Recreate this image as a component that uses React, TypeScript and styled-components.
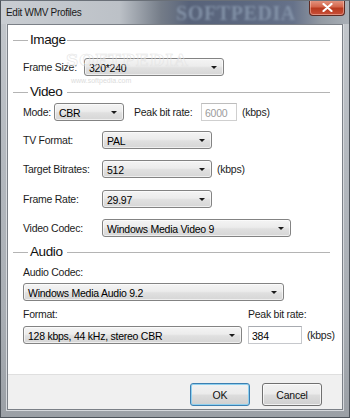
import React from 'react'
import styled, { createGlobalStyle } from 'styled-components'

const GlobalStyle = createGlobalStyle`
  html, body {
    margin: 0;
    padding: 0;
    background: #ffffff;
  }
  body {
    font-family: 'Liberation Sans', Arial, sans-serif;
  }
`

const App: React.FC = () => {
  return (
    <>
      <GlobalStyle />
      <Window>
        <TitleBar>
          <Caption>Edit WMV Profiles</Caption>
          <TitleMark>SOFTPEDIA</TitleMark>
          <CloseButton>
            <svg width="11" height="9" viewBox="0 0 11 9">
              <path d="M1.5 1 L9.5 8 M9.5 1 L1.5 8" stroke="#ffffff" strokeWidth="2.2" strokeLinecap="round" />
            </svg>
          </CloseButton>
        </TitleBar>
        <Client>
          <Content>
            <BodyMark>SOFTPEDIA</BodyMark>
            <BodyUrl>www.softpedia.com</BodyUrl>

            <GroupHeader $top={7}>
              <LeftRule />
              <GroupTitle>Image</GroupTitle>
              <RightRule />
            </GroupHeader>
            <Row $top={10}>
              <Label $w={61}>Frame Size:</Label>
              <Combo $w={140}>
                <ComboText>320*240</ComboText>
                <Arrow />
              </Combo>
            </Row>

            <GroupHeader $top={8}>
              <LeftRule />
              <GroupTitle>Video</GroupTitle>
              <RightRule />
            </GroupHeader>
            <Row $top={3}>
              <Label $w={31}>Mode:</Label>
              <Combo $w={70}>
                <ComboText>CBR</ComboText>
                <Arrow />
              </Combo>
              <Label $w={67} $left={10}>Peak bit rate:</Label>
              <TextBox $w={36} $disabled>6000</TextBox>
              <Unit>(kbps)</Unit>
            </Row>
            <Row $top={10}>
              <Label $w={79}>TV Format:</Label>
              <Combo $w={110}>
                <ComboText>PAL</ComboText>
                <Arrow />
              </Combo>
            </Row>
            <Row $top={11}>
              <Label $w={79}>Target Bitrates:</Label>
              <Combo $w={110}>
                <ComboText>512</ComboText>
                <Arrow />
              </Combo>
              <Unit>(kbps)</Unit>
            </Row>
            <Row $top={12}>
              <Label $w={79}>Frame Rate:</Label>
              <Combo $w={110}>
                <ComboText>29.97</ComboText>
                <Arrow />
              </Combo>
            </Row>
            <Row $top={11}>
              <Label $w={79}>Video Codec:</Label>
              <Combo $w={189}>
                <ComboText>Windows Media Video 9</ComboText>
                <Arrow />
              </Combo>
            </Row>

            <GroupHeader $top={7}>
              <LeftRule />
              <GroupTitle>Audio</GroupTitle>
              <RightRule />
            </GroupHeader>
            <Row $top={3}>
              <Label $w={100}>Audio Codec:</Label>
            </Row>
            <Row $top={2}>
              <Combo $w={261}>
                <ComboText>Windows Media Audio 9.2</ComboText>
                <Arrow />
              </Combo>
            </Row>
            <Row $top={4}>
              <Label $w={225}>Format:</Label>
              <Label $w={70}>Peak bit rate:</Label>
            </Row>
            <Row $top={3}>
              <Combo $w={219}>
                <ComboText>128 kbps, 44 kHz, stereo CBR</ComboText>
                <Arrow />
              </Combo>
              <TextBox $w={54} $left={6}>384</TextBox>
              <Unit>(kbps)</Unit>
            </Row>
          </Content>
          <Footer>
            <Button $focused>OK</Button>
            <Button>Cancel</Button>
          </Footer>
        </Client>
      </Window>
    </>
  )
}

const Window = styled.div`
  position: relative;
  width: 350px;
  height: 418px;
  box-sizing: border-box;
  display: flex;
  flex-direction: column;
  padding: 0 6px 7px 6px;
  border: 1px solid #4e545b;
  border-top-color: #6a7078;
  background: linear-gradient(180deg, #c4c8cd 0%, #b3b8be 40%, #a9aeb4 75%, #9ba0a6 100%);
  overflow: hidden;
`

const TitleBar = styled.div`
  position: relative;
  height: 23px;
  display: flex;
  align-items: center;
  margin: 0 -6px;
  padding: 0 0 0 5px;
  background: linear-gradient(90deg, #c9cdd2 0%, #bcc1c7 34%, #747c88 46%, #58637a 54%, #5c6880 70%, #66728a 84%, #939aa3 92%, #a9afb6 100%);
`

const Caption = styled.div`
  font-size: 10px;
  letter-spacing: -0.3px;
  color: #1a1a1a;
  z-index: 1;
`

const TitleMark = styled.div`
  position: absolute;
  left: 175px;
  top: 1px;
  font-family: 'Liberation Serif', 'DejaVu Serif', serif;
  font-weight: bold;
  font-size: 20px;
  letter-spacing: 0.6px;
  color: #8d9db2;
  opacity: 0.75;
  filter: blur(0.9px);
`

const CloseButton = styled.div`
  position: absolute;
  right: 4px;
  top: -1px;
  width: 36px;
  height: 16px;
  display: flex;
  align-items: center;
  justify-content: center;
  box-sizing: border-box;
  border: 1px solid #5e2a22;
  border-top: none;
  border-radius: 0 0 4px 4px;
  background: linear-gradient(180deg, #e49a86 0%, #d4664c 45%, #b83a1f 55%, #c9503a 100%);
  box-shadow: inset 0 0 0 1px rgba(255, 220, 210, 0.45);
`

const Client = styled.div`
  flex: 1;
  display: flex;
  flex-direction: column;
  border: 1px solid #7b8087;
  box-shadow: 0 0 0 1px #d6d9dd;
  background: #ffffff;
`

const Content = styled.div`
  position: relative;
  height: 349px;
  display: flex;
  flex-direction: column;
  padding: 0 0 0 15px;
  font-size: 10.5px;
  letter-spacing: -0.25px;
  color: #1c1c1c;
`

const BodyMark = styled.div`
  position: absolute;
  left: 58px;
  top: 25px;
  font-family: 'DejaVu Serif', 'Liberation Serif', serif;
  font-weight: bold;
  font-size: 17px;
  letter-spacing: 1px;
  color: transparent;
  -webkit-text-stroke: 0.6px #e4e4e4;
  pointer-events: none;
`

const BodyUrl = styled.div`
  position: absolute;
  left: 63px;
  top: 52px;
  font-size: 7px;
  letter-spacing: 0;
  color: #dcdcdc;
  pointer-events: none;
`

const GroupHeader = styled.div<{ $top: number }>`
  display: flex;
  align-items: center;
  height: 16px;
  margin: ${p => p.$top}px 0 0 -10px;
`

const LeftRule = styled.div`
  width: 15px;
  height: 1px;
  background: #b4b4b4;
`

const RightRule = styled.div`
  flex: 1;
  height: 1px;
  margin-right: 12px;
  background: #b4b4b4;
`

const GroupTitle = styled.div`
  width: 37px;
  padding-left: 2px;
  font-size: 13.5px;
  letter-spacing: -0.4px;
  color: #111111;
  margin-top: -1px;
`

const Row = styled.div<{ $top: number }>`
  display: flex;
  align-items: center;
  height: 18px;
  margin-top: ${p => p.$top}px;
`

const Label = styled.div<{ $w: number; $left?: number }>`
  width: ${p => p.$w}px;
  margin-left: ${p => p.$left || 0}px;
  white-space: nowrap;
`

const Combo = styled.div<{ $w: number }>`
  width: ${p => p.$w}px;
  height: 18px;
  box-sizing: border-box;
  display: flex;
  align-items: center;
  justify-content: space-between;
  padding: 1px 6px 0 4px;
  border: 1px solid #838383;
  border-radius: 3px;
  background: linear-gradient(180deg, #f4f4f4 0%, #ececec 45%, #e0e0e0 55%, #d6d6d6 100%);
  box-shadow: inset 0 0 0 1px rgba(255, 255, 255, 0.6);
`

const ComboText = styled.span`
  color: #000000;
  white-space: nowrap;
`

const Arrow = styled.span`
  width: 0;
  height: 0;
  border-left: 3px solid transparent;
  border-right: 3px solid transparent;
  border-top: 3px solid #1a1a1a;
`

const TextBox = styled.div<{ $w: number; $left?: number; $disabled?: boolean }>`
  width: ${p => p.$w}px;
  height: 18px;
  margin-left: ${p => p.$left || 0}px;
  box-sizing: border-box;
  display: flex;
  align-items: center;
  padding: 1px 3px 0;
  border: 1px solid ${p => (p.$disabled ? '#cfcfcf' : '#c6c8cc')};
  border-top-color: ${p => (p.$disabled ? '#bdbdbd' : '#a8abb0')};
  background: #ffffff;
  color: ${p => (p.$disabled ? '#9c9c9c' : '#000000')};
`

const Unit = styled.div`
  margin-left: 5px;
  white-space: nowrap;
`

const Footer = styled.div`
  flex: 1;
  display: flex;
  justify-content: flex-end;
  align-items: flex-start;
  gap: 12px;
  padding: 8px 20px 0 0;
  background: #f0f0f0;
  border-top: 1px solid #dfdfdf;
`

const Button = styled.div<{ $focused?: boolean }>`
  width: 60px;
  height: 23px;
  box-sizing: border-box;
  display: flex;
  align-items: center;
  justify-content: center;
  font-size: 10.5px;
  letter-spacing: -0.2px;
  color: #111111;
  border: 1px solid ${p => (p.$focused ? '#3c7fb1' : '#707070')};
  border-radius: 3px;
  background: linear-gradient(180deg, #f2f2f2 0%, #ebebeb 48%, #dddddd 52%, #cfcfcf 100%);
  box-shadow: inset 0 0 0 1px ${p => (p.$focused ? '#8fd0ef' : 'rgba(255, 255, 255, 0.7)')};
`

export default App
